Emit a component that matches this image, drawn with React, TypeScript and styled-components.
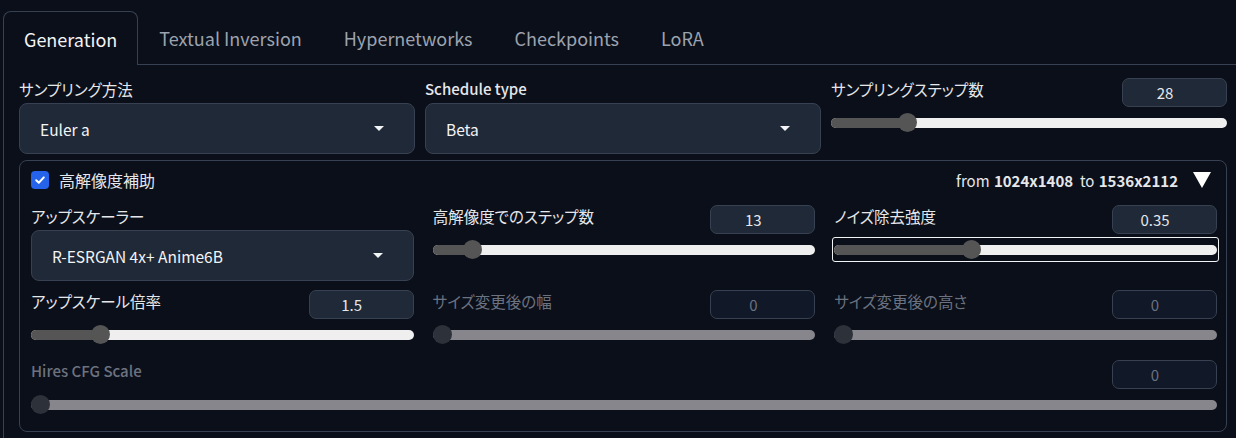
import React, { FC } from 'react'
import styled, { createGlobalStyle, css } from 'styled-components'

const GlobalStyle = createGlobalStyle`
  html, body {
    margin: 0;
    padding: 0;
    background: #0b0f19;
    overflow: hidden;
  }
  body {
    font-family: 'Noto Sans CJK JP', 'Noto Sans', sans-serif;
    color: #e5e7eb;
  }
  * {
    box-sizing: border-box;
  }
`

// Helpers
function isJapanese(text: string) {
  return /[^\x00-\x7F]/.test(text)
}

interface SliderFieldProps {
  label: string
  value: string
  ratio: number
  disabled?: boolean
  focused?: boolean
}

const SliderField: FC<SliderFieldProps> = ({ label, value, ratio, disabled, focused }) => {
  return (
    <Field>
      <FieldHead>
        <Label $disabled={disabled} $jp={isJapanese(label)}>
          {label}
        </Label>
        <NumberBox $disabled={disabled}>{value}</NumberBox>
      </FieldHead>
      <SliderWrap $focused={focused}>
        <Track $disabled={disabled}>
          <Filled style={{ width: `calc(${ratio} * (100% - 19px) + 9px)` }} />
          <Thumb
            $disabled={disabled}
            style={{ left: `calc(${ratio} * (100% - 19px))` }}
          />
        </Track>
      </SliderWrap>
    </Field>
  )
}

interface DropdownFieldProps {
  label: string
  value: string
}

const DropdownField: FC<DropdownFieldProps> = ({ label, value }) => {
  return (
    <Field>
      <Label $jp={isJapanese(label)}>{label}</Label>
      <Dropdown>
        <span>{value}</span>
        <Caret />
      </Dropdown>
    </Field>
  )
}

const tabs = ['Generation', 'Textual Inversion', 'Hypernetworks', 'Checkpoints', 'LoRA']

const App: FC = () => {
  return (
    <>
      <GlobalStyle />
      <Page>
        <TabBar>
          {tabs.map((t, i) => (
            <Tab key={t} $active={i === 0}>
              {t}
            </Tab>
          ))}
        </TabBar>

        <TabPanel>
          <Grid $gap={10}>
            <DropdownField label="サンプリング方法" value="Euler a" />
            <DropdownField label="Schedule type" value="Beta" />
            <SliderField label="サンプリングステップ数" value="28" ratio={0.179} />
          </Grid>

          <HiresBox>
            <HiresHeader>
              <CheckLabel>
                <CheckBox>
                  <svg width="12" height="12" viewBox="0 0 12 12">
                    <path
                      d="M2.2 6.3 L4.8 8.8 L9.8 3.4"
                      fill="none"
                      stroke="#fff"
                      strokeWidth="2"
                      strokeLinecap="round"
                      strokeLinejoin="round"
                    />
                  </svg>
                </CheckBox>
                高解像度補助
              </CheckLabel>
              <ResInfo>
                from <b>1024x1408</b>&nbsp; to <b>1536x2112</b>
                <Collapse />
              </ResInfo>
            </HiresHeader>

            <Grid $gap={19} $top={16}>
              <DropdownField label="アップスケーラー" value="R-ESRGAN 4x+ Anime6B" />
              <SliderField label="高解像度でのステップ数" value="13" ratio={0.084} />
              <SliderField label="ノイズ除去強度" value="0.35" ratio={0.351} focused />
            </Grid>

            <Grid $gap={19} $top={9}>
              <SliderField label="アップスケール倍率" value="1.5" ratio={0.164} />
              <SliderField label="サイズ変更後の幅" value="0" ratio={0} disabled />
              <SliderField label="サイズ変更後の高さ" value="0" ratio={0} disabled />
            </Grid>

            <WideRow>
              <SliderField label="Hires CFG Scale" value="0" ratio={0} disabled />
            </WideRow>
          </HiresBox>
        </TabPanel>
      </Page>
    </>
  )
}

export default App

// Styles
const Page = styled.div`
  width: 1242px;
  height: 438px;
  padding-left: 3px;
`

const TabBar = styled.div`
  display: flex;
  height: 65px;
  padding-top: 11px;
  border-bottom: 1px solid #374151;
`

const Tab = styled.div<{ $active?: boolean }>`
  display: flex;
  align-items: center;
  padding: 0 20px;
  font-size: 18px;
  color: #9ca3af;
  border: 1px solid transparent;
  border-bottom: none;

  ${(p) =>
    p.$active &&
    css`
      color: #f3f4f6;
      border-color: #374151;
      border-radius: 8px 8px 0 0;
      background: #0b0f19;
      margin-bottom: -1px;
    `}
`

const TabPanel = styled.div`
  border-left: 1px solid #374151;
  padding: 13px 15px 0 15px;
  height: 373px;
`

const Grid = styled.div<{ $gap: number; $top?: number }>`
  display: grid;
  grid-template-columns: repeat(3, 1fr);
  column-gap: ${(p) => p.$gap}px;
  margin-top: ${(p) => p.$top ?? 0}px;
  align-items: start;
`

const WideRow = styled.div`
  margin-top: 13px;
`

const Field = styled.div`
  display: flex;
  flex-direction: column;
  min-width: 0;
`

const FieldHead = styled.div`
  display: flex;
  justify-content: space-between;
  align-items: flex-start;
`

const Label = styled.div<{ $disabled?: boolean; $jp?: boolean }>`
  font-size: ${(p) => (p.$jp ? '15.5px' : '15px')};
  font-feature-settings: 'palt';
  font-weight: ${(p) => (p.$jp ? 400 : 500)};
  line-height: 22px;
  margin-bottom: 2px;
  color: ${(p) => (p.$disabled ? '#6b7280' : '#e5e7eb')};
`

const NumberBox = styled.div<{ $disabled?: boolean }>`
  width: 105px;
  height: 29px;
  padding-right: 19px;
  border: 1px solid #374151;
  border-radius: 7px;
  background: ${(p) => (p.$disabled ? '#111827' : '#1f2937')};
  color: ${(p) => (p.$disabled ? '#6b7280' : '#e5e7eb')};
  font-size: 15px;
  display: flex;
  align-items: center;
  justify-content: center;
`

const SliderWrap = styled.div<{ $focused?: boolean }>`
  height: 25px;
  margin-top: 3px;
  display: flex;
  align-items: center;

  ${(p) =>
    p.$focused &&
    css`
      margin-left: -2px;
      margin-right: -2px;
      padding: 0 1px;
      border: 1px solid #f3f4f6;
      border-radius: 3px;
    `}
`

const Track = styled.div<{ $disabled?: boolean }>`
  position: relative;
  flex: 1;
  height: 10px;
  border-radius: 5px;
  background: ${(p) => (p.$disabled ? '#86868c' : '#efefef')};
`

const Filled = styled.div`
  position: absolute;
  top: 0;
  left: 0;
  height: 100%;
  border-radius: 5px 0 0 5px;
  background: #555555;
`

const Thumb = styled.div<{ $disabled?: boolean }>`
  position: absolute;
  top: -5px;
  width: 19px;
  height: 19px;
  border-radius: 50%;
  background: ${(p) => (p.$disabled ? '#2d3139' : '#555555')};
`

const Dropdown = styled.div`
  height: 51px;
  margin-top: 1px;
  border: 1px solid #374151;
  border-radius: 8px;
  background: #1f2937;
  display: flex;
  align-items: center;
  justify-content: space-between;
  padding: 0 30px 0 20px;
  font-size: 15.5px;
  color: #f3f4f6;
`

const Caret = styled.span`
  width: 0;
  height: 0;
  border-left: 5px solid transparent;
  border-right: 5px solid transparent;
  border-top: 5px solid #f3f4f6;
`

const HiresBox = styled.div`
  margin-top: 6px;
  border: 1px solid #374151;
  border-radius: 8px;
  padding: 10px 9px 15px 11px;
  height: 272px;
`

const HiresHeader = styled.div`
  display: flex;
  justify-content: space-between;
  align-items: center;
  height: 18px;
`

const CheckLabel = styled.label`
  display: flex;
  align-items: center;
  gap: 10px;
  font-size: 16px;
  color: #e5e7eb;
`

const CheckBox = styled.span`
  width: 18px;
  height: 18px;
  border-radius: 4px;
  background: #2563eb;
  display: flex;
  align-items: center;
  justify-content: center;
`

const ResInfo = styled.div`
  display: flex;
  align-items: center;
  font-size: 15px;
  color: #e5e7eb;
  white-space: pre;
  padding-right: 6px;

  b {
    font-weight: 700;
    margin-left: 1px;
  }
`

const Collapse = styled.span`
  margin-left: 15px;
  width: 0;
  height: 0;
  border-left: 9px solid transparent;
  border-right: 9px solid transparent;
  border-top: 16px solid #ffffff;
`
